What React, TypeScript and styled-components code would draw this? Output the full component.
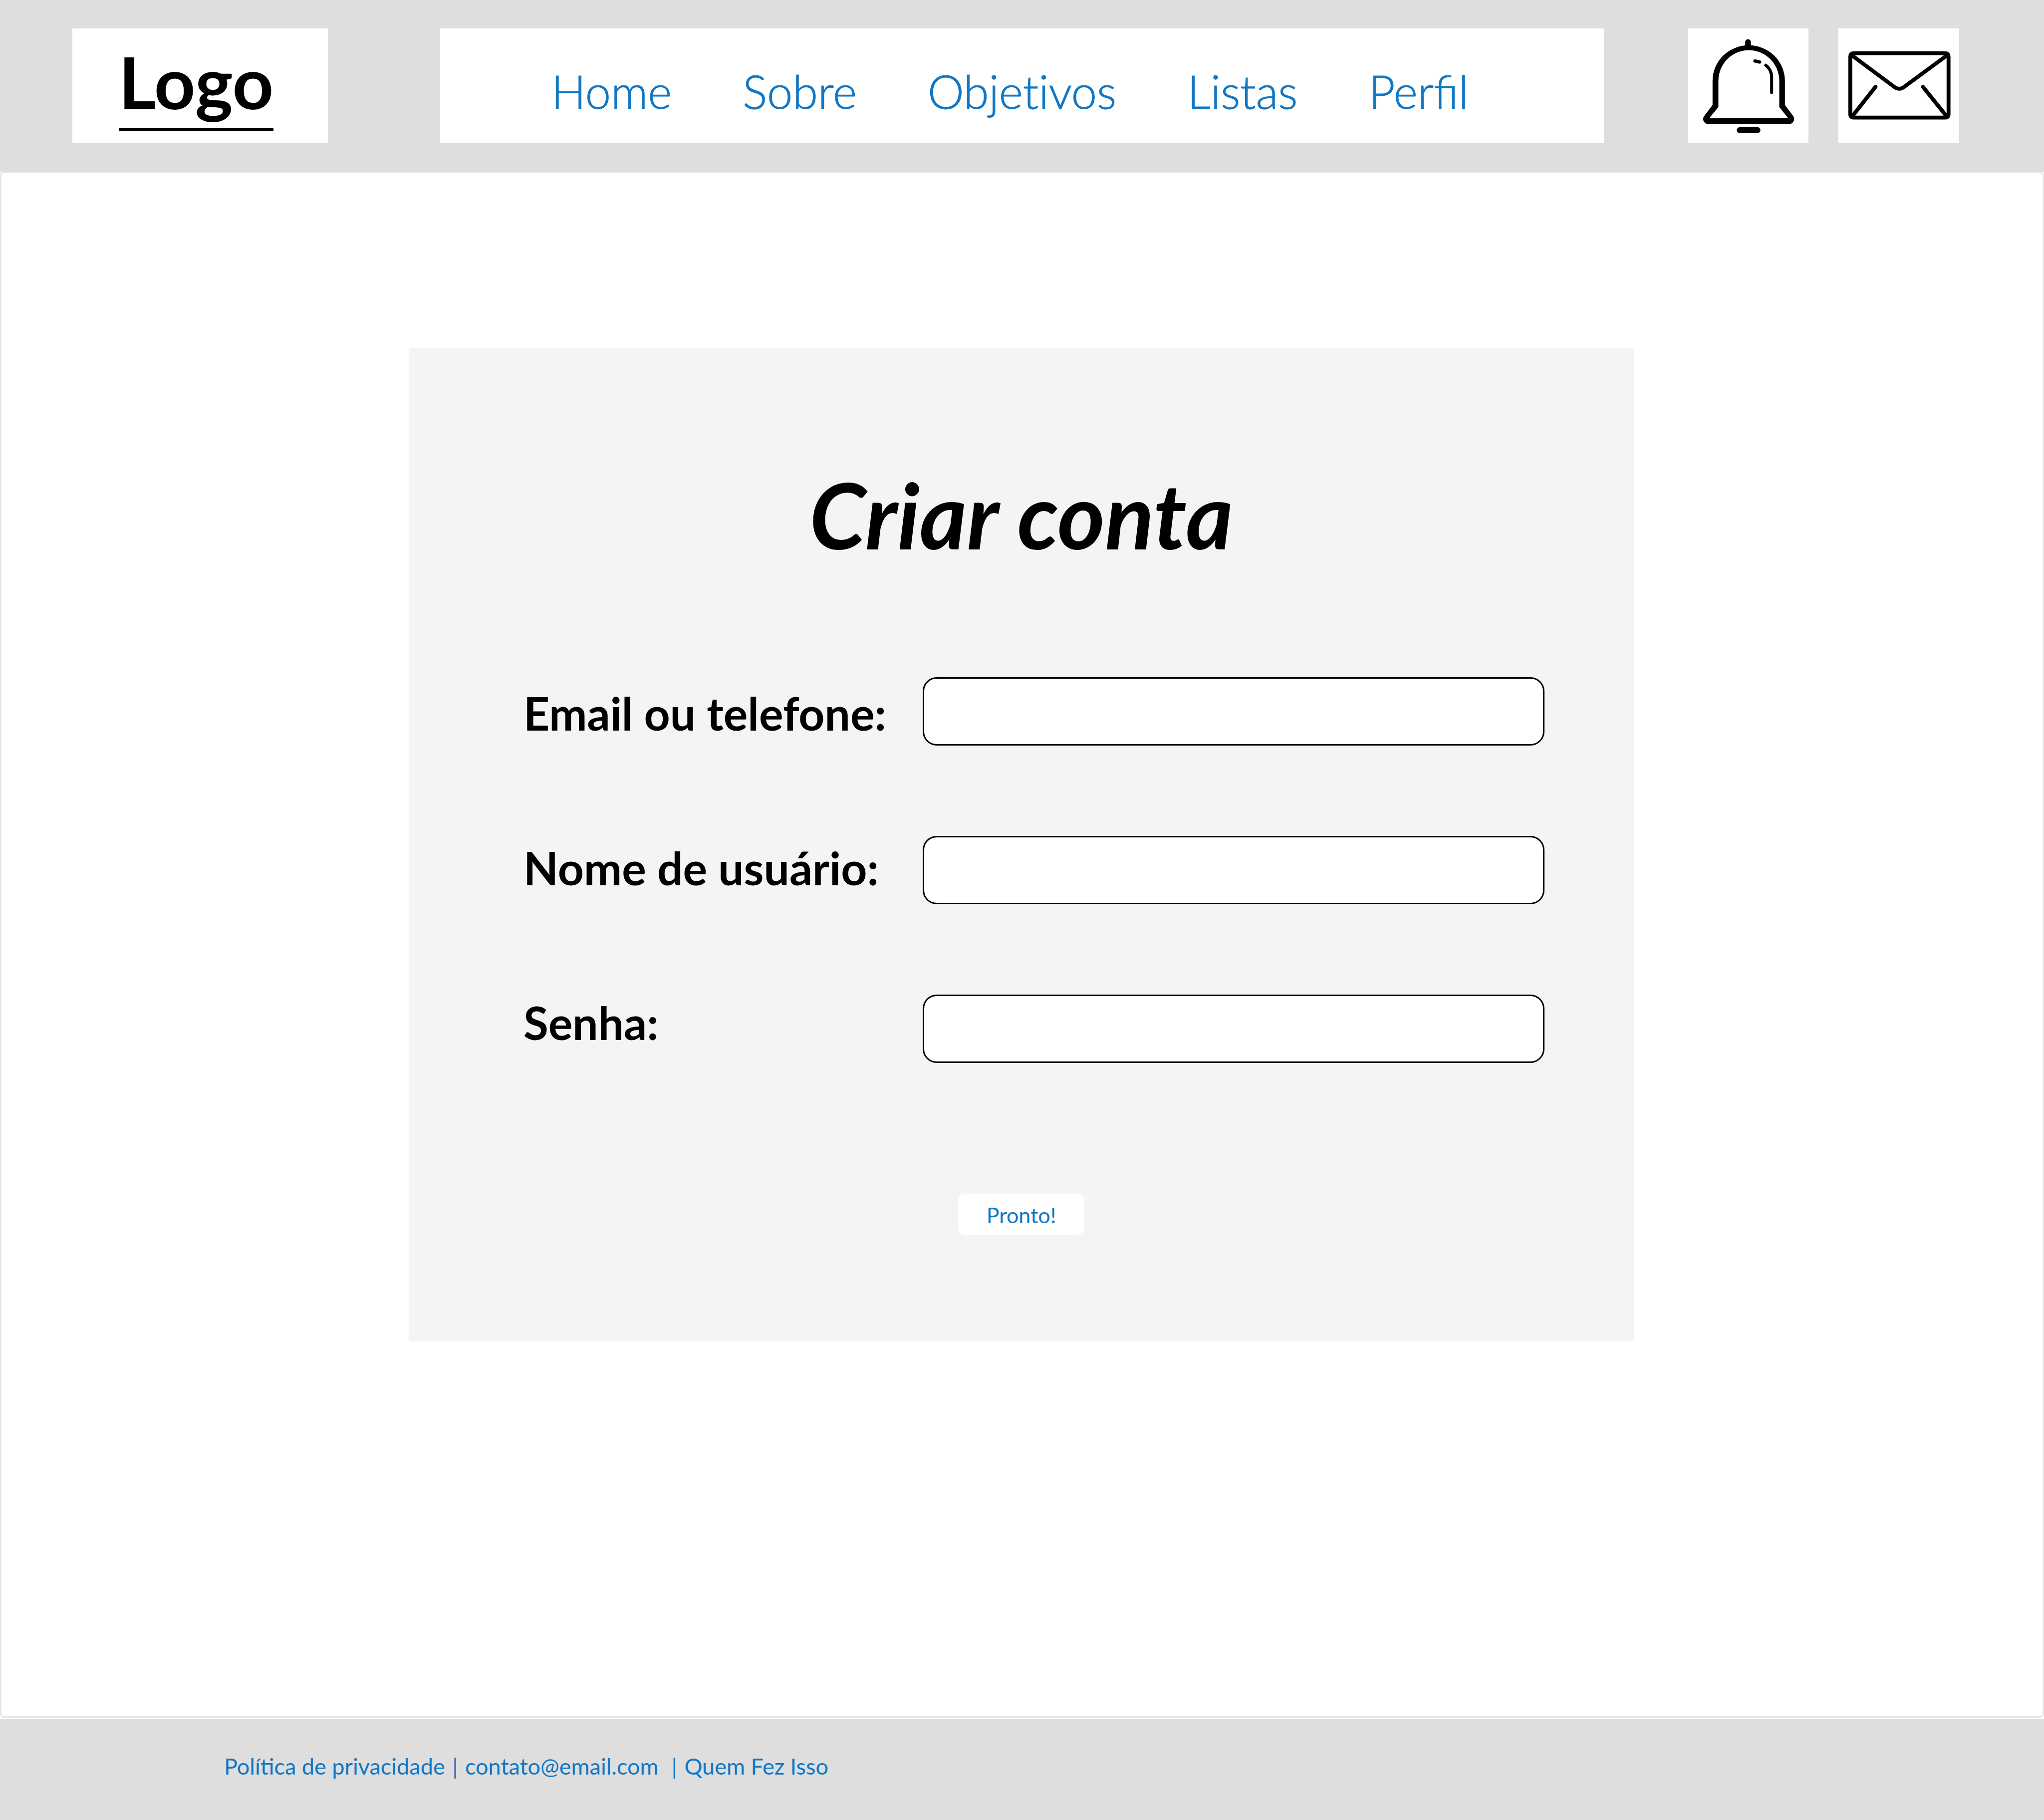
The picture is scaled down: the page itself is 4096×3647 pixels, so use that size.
import React from "react";
import styled, { createGlobalStyle } from "styled-components";

const GlobalStyle = createGlobalStyle`
  *, *::before, *::after { box-sizing: border-box; }
  body { margin: 0; background: #fff; color: #000; font-family: Lato, sans-serif; }
`;

const Page = styled.div`
  display: flex;
  flex-direction: column;
  min-height: 100vh;
`;

const Header = styled.header`
  display: flex;
  align-items: stretch;
  height: 344px;
  padding: 57px 170px 57px 145px;
  background: #dedede;
`;

const LogoBox = styled.a`
  display: flex;
  align-items: center;
  justify-content: center;
  flex: none;
  width: 512px;
  padding: 0 16px 16px 0;
  background: #fff;
  color: #000;
  text-decoration: none;
`;

const LogoText = styled.span`
  padding-top: 6px;
  border-bottom: 7px solid #000;
  font-size: 144px;
  font-weight: 700;
  line-height: 184px;
`;

const Nav = styled.nav`
  display: flex;
  align-items: center;
  justify-content: center;
  flex: 1;
  gap: 142px;
  margin: 0 168px 0 225px;
  padding: 22px 48px 0 0;
  background: #fff;
`;

const NavLink = styled.a<{ $ligatures: boolean }>`
  color: #1077c4;
  font-size: 92px;
  font-weight: 300;
  font-variant-ligatures: ${(props) => (props.$ligatures ? "normal" : "none")};
  line-height: 112px;
  text-decoration: none;
  -webkit-text-stroke: 1px #1077c4;
`;

const Actions = styled.div`
  display: flex;
  flex: none;
  gap: 60px;
`;

const IconButton = styled.button`
  width: 242px;
  padding: 0;
  border: 0;
  background: #fff;
  cursor: pointer;

  svg { display: block; }
`;

const Main = styled.main`
  display: flex;
  flex: 1;
  justify-content: center;
  align-items: flex-start;
  margin-bottom: 3px;
  padding: 350px 3px 0 0;
  border: 3px solid #e6e6e6;
  border-radius: 8px;
`;

const Card = styled.form`
  display: flex;
  flex-direction: column;
  align-items: center;
  width: 100%;
  max-width: 2455px;
  padding: 224px 0 214px;
  background: #f4f4f4;
`;

const Title = styled.h1`
  margin: 0 0 216px;
  font-size: 182px;
  font-style: italic;
  font-weight: 700;
  line-height: 220px;
`;

const Fields = styled.div`
  display: flex;
  justify-content: space-between;
  align-self: stretch;
  margin-bottom: 262px;
  padding: 0 179px 0 230px;
`;

const Labels = styled.div`
  display: flex;
  flex-direction: column;
  gap: 198px;
  padding-top: 16px;
`;

const Label = styled.label`
  font-size: 91px;
  font-weight: 700;
  line-height: 112px;
  white-space: nowrap;
`;

const Inputs = styled.div`
  display: flex;
  flex-direction: column;
  gap: 181px;
  width: 1246px;
`;

const Input = styled.input`
  width: 100%;
  height: 137px;
  padding: 0 32px;
  border: 3px solid #000;
  border-radius: 28px;
  background: #fff;
  font: 64px Lato, sans-serif;
`;

const Submit = styled.button`
  width: 253px;
  height: 82px;
  padding: 4px 0 0;
  border: 0;
  border-radius: 14px;
  background: #fff;
  color: #1077c4;
  font: 43px/52px Lato, sans-serif;
  cursor: pointer;
`;

const Footer = styled.footer`
  height: 202px;
  padding: 66px 446px 0;
  background: #dedede;
  color: #1077c4;
  font-size: 45px;
  line-height: 56px;
  white-space: pre-wrap;
`;

const FooterLink = styled.a`
  padding: 0 3px;
  color: inherit;
  text-decoration: none;
`;

const BellIcon = () => (
  <svg width="242" height="230" viewBox="0 0 242 230" aria-hidden="true">
    <path d="M115.2 36V27.5C115.2 19.7 126.6 19.7 126.6 27.5V36Z" />
    <path
      fillRule="evenodd"
      d="M49.8 105V153.6L33 175.5C28 183 33 191.8 42.5 191.8H202.5C211 191.8 216 183 211.5 175.5L194.8 153.6V105A72.5 71.3 0 0 0 49.8 105ZM61.5 105V157.5L43 180H201.5L183.5 157.5V105A61 61.5 0 0 0 61.5 105Z"
    />
    <rect x="98.4" y="197.8" width="47.4" height="12" rx="6" />
    <g fill="none" stroke="#000" strokeLinecap="round">
      <path strokeWidth="6.8" d="M134.9 65.2L144 67.2" />
      <path strokeWidth="6" d="M156.4 73.6C164.4 80 168.2 88 168.2 98V128.6" />
    </g>
  </svg>
);

const MailIcon = () => (
  <svg width="242" height="230" viewBox="0 0 242 230" aria-hidden="true">
    <g fill="none" stroke="#000" strokeWidth="7.8" strokeLinecap="round">
      <rect x="23.9" y="49.7" width="196.8" height="129" rx="6" />
      <path d="M25 52.4L113 117.8Q121.9 123.9 130.8 117.8L219.7 52.4" />
      <path d="M27 177L74.4 117M217.6 177L169.4 117" />
    </g>
  </svg>
);

const links = [
  { name: "Home", ligatures: true },
  { name: "Sobre", ligatures: true },
  { name: "Objetivos", ligatures: false },
  { name: "Listas", ligatures: true },
  { name: "Perfil", ligatures: true },
];

const fields = [
  { id: "contact", label: "Email ou telefone:", type: "text" },
  { id: "username", label: "Nome de usuário:", type: "text" },
  { id: "password", label: "Senha:", type: "password" },
];

export default function App() {
  return (
    <Page>
      <GlobalStyle />
      <Header>
        <LogoBox href="#">
          <LogoText>Logo</LogoText>
        </LogoBox>
        <Nav>
          {links.map((link) => (
            <NavLink key={link.name} href="#" $ligatures={link.ligatures}>
              {link.name}
            </NavLink>
          ))}
        </Nav>
        <Actions>
          <IconButton type="button" aria-label="Notificações"><BellIcon /></IconButton>
          <IconButton type="button" aria-label="Mensagens"><MailIcon /></IconButton>
        </Actions>
      </Header>
      <Main>
        <Card onSubmit={(event: React.FormEvent) => event.preventDefault()}>
          <Title>Criar conta</Title>
          <Fields>
            <Labels>
              {fields.map((field) => (
                <Label key={field.id} htmlFor={field.id}>{field.label}</Label>
              ))}
            </Labels>
            <Inputs>
              {fields.map((field) => (
                <Input key={field.id} id={field.id} type={field.type} />
              ))}
            </Inputs>
          </Fields>
          <Submit type="submit">Pronto!</Submit>
        </Card>
      </Main>
      <Footer>
        <FooterLink href="#">Política de privacidade</FooterLink>
        {" | "}
        <FooterLink href="mailto:contato@email.com">contato@email.com</FooterLink>
        {"  | "}
        <FooterLink href="#">Quem Fez Isso</FooterLink>
      </Footer>
    </Page>
  );
}
